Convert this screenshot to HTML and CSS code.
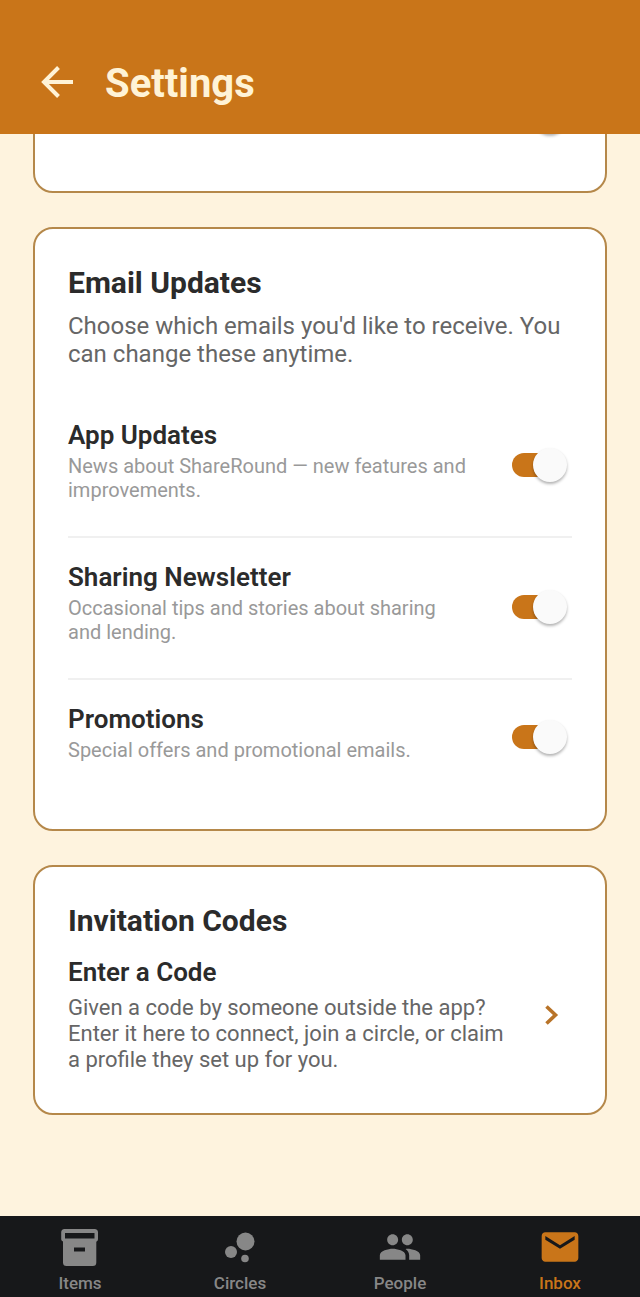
FILE: index.html
```html
<!DOCTYPE html>
<html lang="en">
<head>
    <meta charset="UTF-8">
    <meta name="viewport" content="width=device-width, initial-scale=1.0">
    <title>Settings</title>
    <link rel="stylesheet" href="styles.css">
</head>
<body>
    <header class="app-bar">
        <button type="button" class="back" aria-label="Back">
            <svg width="32" height="32" viewBox="0 0 32 32" fill="none" stroke="currentColor" stroke-width="4">
                <path d="M32 16H3M17.5 1.5L3 16l14.5 14.5"/>
            </svg>
        </button>
        <h1>Settings</h1>
    </header>

    <main class="content">
        <section class="card">
            <div class="row compact">
                <div class="row-text"></div>
                <input type="checkbox" class="switch" aria-label="Notifications" checked>
            </div>
        </section>

        <section class="card">
            <h2>Email Updates</h2>
            <p class="intro">Choose which emails you'd like to receive. You can change these anytime.</p>

            <div class="row">
                <div class="row-text">
                    <label for="app-updates">App Updates</label>
                    <p>News about ShareRound — new features and improvements.</p>
                </div>
                <input type="checkbox" class="switch" id="app-updates" checked>
            </div>
            <div class="row">
                <div class="row-text">
                    <label for="newsletter">Sharing Newsletter</label>
                    <p>Occasional tips and stories about sharing and lending.</p>
                </div>
                <input type="checkbox" class="switch" id="newsletter" checked>
            </div>
            <div class="row last">
                <div class="row-text">
                    <label for="promotions">Promotions</label>
                    <p>Special offers and promotional emails.</p>
                </div>
                <input type="checkbox" class="switch" id="promotions" checked>
            </div>
        </section>

        <section class="card">
            <h2>Invitation Codes</h2>
            <a href="#enter-code" class="code-link">
                <div class="code-text">
                    <h3>Enter a Code</h3>
                    <p>Given a code by someone outside the app? Enter it here to connect, join a circle, or claim a profile they set up for you.</p>
                </div>
                <svg class="chevron" width="14" height="20" viewBox="0 0 14 20" fill="none" stroke="currentColor" stroke-width="3.6">
                    <path d="M1.500 1.500L10.500 10 1.500 18.500"/>
                </svg>
            </a>
        </section>
    </main>

    <nav class="tabs">
        <a href="#items">
            <svg width="44" height="44" viewBox="0 0 44 44" fill="currentColor">
                <path fill-rule="evenodd" d="M6.500 4h30A3.500 3.500 0 0 1 40 7.500v6.500c0 1.300-.700 2.200-1.700 2.800V37.500a3.500 3.500 0 0 1-3.500 3.500H8.500A3.500 3.500 0 0 1 5 37.500V16.500C3.800 16 3.200 15 3.200 14V7.500A3.500 3.500 0 0 1 6.500 4zM7 8v5.500h29.500V8zM16 22.500v4h11v-4z"/>
            </svg>
            <span>Items</span>
        </a>
        <a href="#circles">
            <svg width="44" height="44" viewBox="0 0 44 44" fill="currentColor">
                <circle cx="13" cy="27" r="6"/>
                <circle cx="27.500" cy="16.500" r="9"/>
                <circle cx="27" cy="33.500" r="3.800"/>
            </svg>
            <span>Circles</span>
        </a>
        <a href="#people">
            <svg width="44" height="44" viewBox="0 0 24 24" fill="currentColor">
                <path d="M16 11c1.660 0 2.990-1.340 2.990-3S17.660 5 16 5s-3 1.340-3 3 1.340 3 3 3zm-8 0c1.660 0 2.990-1.340 2.990-3S9.660 5 8 5 5 6.340 5 8s1.340 3 3 3zm0 2c-2.330 0-7 1.170-7 3.500V19h14v-2.500c0-2.330-4.670-3.500-7-3.500zm8 0c-.29 0-.62.020-.97.050 1.160.84 1.970 1.970 1.970 3.450V19h6v-2.500c0-2.330-4.670-3.500-7-3.500z"/>
            </svg>
            <span>People</span>
        </a>
        <a href="#inbox" class="active" aria-current="page">
            <svg width="44" height="44" viewBox="0 0 24 24" fill="currentColor">
                <path d="M20 4H4c-1.100 0-1.990.9-1.990 2L2 18c0 1.100.9 2 2 2h16c1.100 0 2-.9 2-2V6c0-1.100-.9-2-2-2zm0 4l-8 5-8-5V6l8 5 8-5v2z"/>
            </svg>
            <span>Inbox</span>
        </a>
    </nav>
</body>
</html>
```
FILE: styles.css
```css
* {
    box-sizing: border-box;
}
body {
    display: flex;
    flex-direction: column;
    height: 100vh;
    margin: 0;
    font-family: Roboto, "Liberation Sans", sans-serif;
    background: #fef3de;
    color: #2b2b2b;
}
h1, h2, h3, p {
    margin: 0;
}
a {
    color: inherit;
    text-decoration: none;
}

/* Top bar */
.app-bar {
    display: flex;
    align-items: center;
    gap: 32px;
    padding: 58px 41px 24px;
    background: #c97519;
    color: #fff3d6;
}
.app-bar h1 {
    font-size: 40px;
    line-height: 52px;
    font-weight: 700;
}
.back {
    display: flex;
    padding: 0 0 4px;
    border: 0;
    background: none;
    color: inherit;
}

/* Scrolled to the end: older cards run off under the top bar */
.content {
    flex: 1;
    min-height: 0;
    display: flex;
    flex-direction: column;
    justify-content: flex-end;
    gap: 34px;
    padding: 0 33px 101px;
    overflow: hidden;
}
.card {
    flex-shrink: 0;
    padding: 32px 33px;
    border: 2px solid #b5884a;
    border-radius: 20px;
    background: white;
}
.card h2 {
    font-size: 30px;
    line-height: 44px;
    font-weight: 700;
}
.intro {
    margin: 7px 0 28px;
    font-size: 24px;
    line-height: 28px;
    color: #666;
}

.row {
    display: flex;
    align-items: center;
    gap: 40px;
    padding: 24px 0 26px;
    border-bottom: 2px solid #f0f0f0;
}
.row.last {
    padding-bottom: 27px;
    border-bottom: 0;
}
.row.compact {
    padding-bottom: 9px;
    border-bottom: 0;
}
.row-text {
    flex: 1;
    min-height: 66px;
    padding-bottom: 8px;
}
.row-text label,
.code-text h3 {
    display: block;
    font-size: 26px;
    line-height: 30px;
    font-weight: 600;
}
.row-text p {
    margin-top: 4px;
    font-size: 20px;
    line-height: 24px;
    color: #999;
}

/* Toggle switch */
.switch {
    appearance: none;
    display: flex;
    align-items: center;
    width: 55px;
    height: 34px;
    margin: 0 5px 0 0;
}
.switch::before {
    content: "";
    width: 44px;
    height: 24px;
    margin-right: -23px;
    border-radius: 12px;
    background: #c97519;
}
.switch::after {
    content: "";
    width: 34px;
    height: 34px;
    border-radius: 50%;
    background: #fafafa;
    box-shadow: 0 2px 3px rgba(0,0,0,0.3);
}

.code-link {
    display: flex;
    align-items: center;
    gap: 32px;
    padding: 14px 13px 8px 0;
}
.code-text {
    flex: 1;
}
.code-text p {
    margin-top: 8px;
    font-size: 22px;
    line-height: 26px;
    color: #666;
}
.chevron {
    color: #b87328;
}

/* Bottom tabs */
.tabs {
    display: flex;
    padding: 9px 0 4px;
    background: #17181a;
    color: #878787;
}
.tabs a {
    flex: 1;
    display: flex;
    flex-direction: column;
    align-items: center;
    gap: 4px;
    font-size: 17px;
    line-height: 20px;
    font-weight: 500;
}
.tabs .active {
    color: #c97519;
}
```
